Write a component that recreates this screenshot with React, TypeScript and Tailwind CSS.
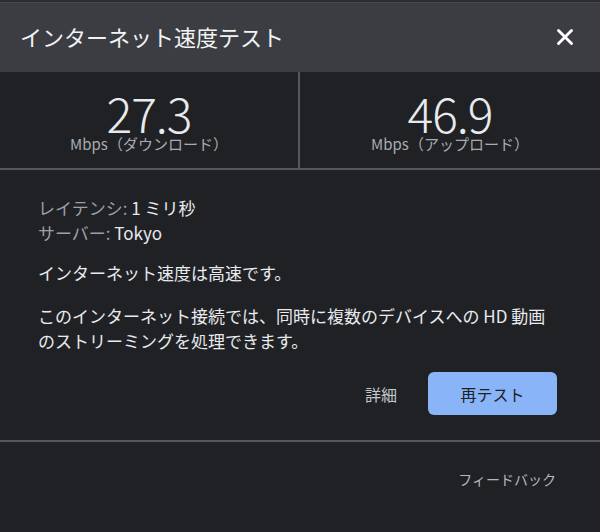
import { X } from 'lucide-react';

const font = { fontFamily: '"Noto Sans CJK JP", "Noto Sans", sans-serif' };

function Result({ value, label, divider }: { value: string; label: string; divider?: boolean }) {
  return (
    <div className={`flex flex-col items-center pt-[18px] ${divider ? 'border-r-2 border-[#55575c]' : ''}`}>
      <span className="text-[48px] leading-[44px] text-[#e8eaed] font-light tracking-[-1px]">{value}</span>
      <span className="text-[15px] leading-[20px] text-[#a9abb0]">{label}</span>
    </div>
  );
}

export default function App() {
  return (
    <div className="w-[600px] h-[532px] bg-[#202125] flex flex-col" style={font}>
      {/* Header */}
      <div className="h-[3px] bg-[#2c2d31] border-b border-[#47484c]" />
      <div className="h-[69px] bg-[#3c3d42] flex items-center justify-between pl-[20px] pr-[22px] pb-[2px]">
        <h1 className="text-[22px] text-[#f1f3f4]">インターネット速度テスト</h1>
        <X size={26} strokeWidth={2.6} className="text-white" />
      </div>

      {/* Results */}
      <div className="grid grid-cols-2 h-[98px] border-b-2 border-[#55575c]">
        <Result value="27.3" label="Mbps（ダウンロード）" divider />
        <Result value="46.9" label="Mbps（アップロード）" />
      </div>

      {/* Details */}
      <div className="px-[38px] pt-[25px] text-[17px] leading-[25px] text-[#e8eaed]">
        <p><span className="text-[#9aa0a6]">レイテンシ:</span> 1 ミリ秒</p>
        <p><span className="text-[#9aa0a6]">サーバー:</span> Tokyo</p>
        <p className="mt-[15px]">インターネット速度は高速です。</p>
        <p className="mt-[18px]">
          このインターネット接続では、同時に複数のデバイスへの HD 動画
          <br />
          のストリーミングを処理できます。
        </p>
      </div>

      <div className="flex items-center justify-end gap-[31px] pr-[43px] mt-[19px]">
        <button className="text-[16px] text-[#c4c7cc]">詳細</button>
        <button className="w-[129px] h-[43px] rounded-[6px] bg-[#8ab4f8] text-[16px] text-[#202124]">再テスト</button>
      </div>

      <div className="mt-[25px] border-t-2 border-[#55575c]" />

      <div className="flex justify-end pr-[44px] pt-[27px]">
        <button className="text-[14px] text-[#b4b7bc]">フィードバック</button>
      </div>
    </div>
  );
}
